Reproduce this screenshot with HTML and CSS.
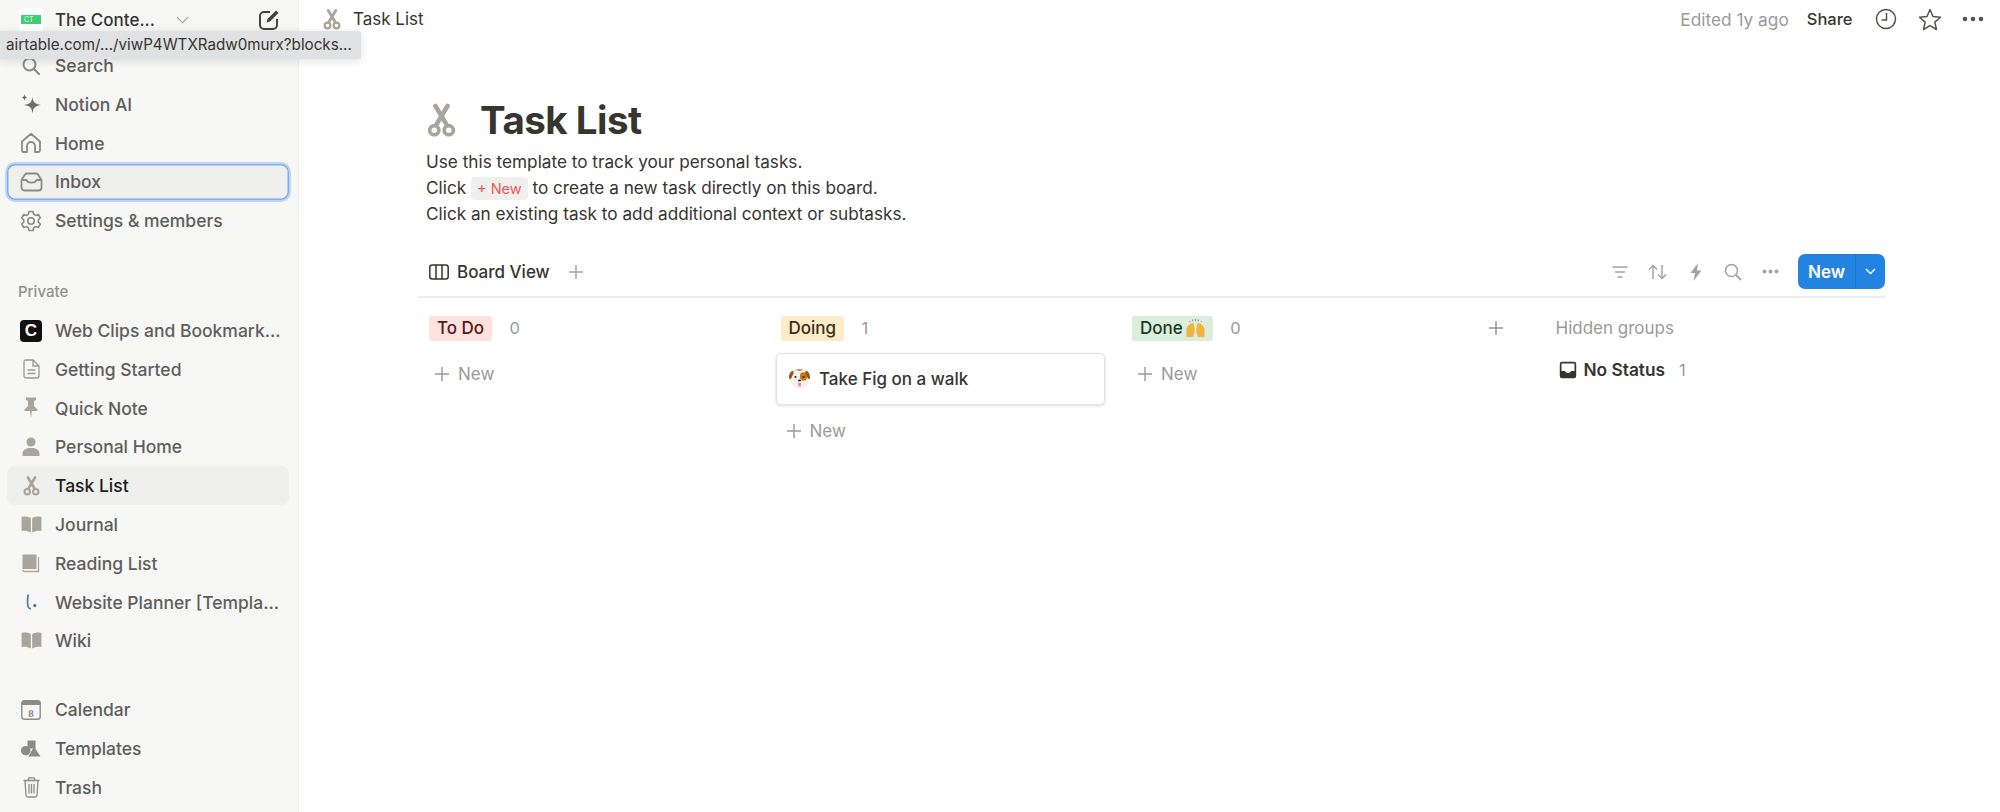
FILE: index.html
```html
<!DOCTYPE html>
<html>
<head>
    <title>Task List</title>
    <link rel="stylesheet" href="styles.css">
</head>
<body>
    <svg class="defs" width="0" height="0">
        <symbol id="scissors" viewBox="0 0 24 28">
            <path d="M7 2 L16 17 M17 2 L8 17" fill="none" stroke="currentColor" stroke-width="3.8" stroke-linecap="round"/>
            <circle cx="6" cy="22" r="3.8" fill="none" stroke="currentColor" stroke-width="3"/>
            <circle cx="18" cy="22" r="3.8" fill="none" stroke="currentColor" stroke-width="3"/>
        </symbol>
        <symbol id="book" viewBox="0 0 22 18">
            <path d="M0.500 1 C4 0 7.500 0.500 10.300 2 V17.500 C7.500 16 4 15.500 1.500 15.800 L0.500 15.500 Z M21.500 1 C18 0 14.500 0.500 11.700 2 V17.500 C14.500 16 18 15.500 20.500 15.800 L21.500 15.500 Z" fill="currentColor"/>
        </symbol>
        <symbol id="plus" viewBox="0 0 16 16">
            <path d="M8 1 V15 M1 8 H15" fill="none" stroke="currentColor" stroke-width="1.4"/>
        </symbol>
    </svg>

    <div class="app">
        <aside class="sidebar">
            <div class="workspace">
                <span class="ws-logo"><span class="ws-badge">CT</span></span>
                <span class="ws-name">The Conte...</span>
                <svg class="ws-caret" viewBox="0 0 14 8"><path d="M1 1 L7 7 L13 1" fill="none" stroke="currentColor" stroke-width="1.2"/></svg>
                <svg class="ws-edit" viewBox="0 0 22 22"><path d="M12 3 H6 A4 4 0 0 0 2 7 V16 A4 4 0 0 0 6 20 H15 A4 4 0 0 0 19 16 V10" fill="none" stroke="currentColor" stroke-width="2"/><path d="M8.500 13.500 L9.500 10 L18 1.500 L20.500 4 L12 12.500 Z" fill="currentColor"/></svg>
            </div>
            <div class="tooltip">airtable.com/.../viwP4WTXRadw0murx?blocks...</div>

            <nav class="nav-group nav-top">
                <a class="nav-row"><span class="nav-icon"><svg width="20" height="20" viewBox="0 0 20 20"><circle cx="8.500" cy="8.500" r="6" fill="none" stroke="currentColor" stroke-width="2"/><path d="M13 13 L18 18" stroke="currentColor" stroke-width="2.200" stroke-linecap="round"/></svg></span>Search</a>
                <a class="nav-row"><span class="nav-icon"><svg width="20" height="20" viewBox="0 0 20 20"><path d="M11.500 2.500 C12 8 13.500 10 20 11 C13.500 12 12 14 11.500 20 C11 14 9.500 12 3 11 C9.500 10 11 8 11.500 2.500 Z M3.500 0 C3.800 2.500 4.500 3.200 7 3.500 C4.500 3.800 3.800 4.500 3.500 7 C3.200 4.500 2.500 3.800 0 3.500 C2.500 3.200 3.200 2.500 3.500 0 Z" fill="#6e6d69"/></svg></span>Notion AI</a>
                <a class="nav-row"><span class="nav-icon"><svg width="22" height="22" viewBox="0 0 22 22"><path d="M2 9.500 L11 1.800 L20 9.500 V18.500 A1.500 1.500 0 0 1 18.500 20 H15 V14 A4 4 0 0 0 7 14 V20 H3.500 A1.500 1.500 0 0 1 2 18.500 Z" fill="none" stroke="currentColor" stroke-width="1.800" stroke-linejoin="round"/></svg></span>Home</a>
                <a class="nav-row nav-focus"><span class="nav-icon"><svg width="23" height="20" viewBox="0 0 23 20"><path d="M1.500 8 L5 2.500 A2 2 0 0 1 6.800 1.500 H16.200 A2 2 0 0 1 18 2.500 L21.500 8 V15.500 A3 3 0 0 1 18.500 18.500 H4.500 A3 3 0 0 1 1.500 15.500 Z M1.500 8 H6.500 C7.500 11.500 15.500 11.500 16.500 8 H21.500" fill="none" stroke="currentColor" stroke-width="1.800"/></svg></span>Inbox</a>
                <a class="nav-row"><span class="nav-icon"><svg width="22" height="22" viewBox="0 0 22 22"><circle cx="11" cy="11" r="3.200" fill="none" stroke="currentColor" stroke-width="1.600"/><path d="M9 1.500 H13 L13.600 4.200 L15.700 5.400 L18.300 4.500 L20.300 8 L18.300 9.800 V12.200 L20.300 14 L18.300 17.500 L15.700 16.600 L13.600 17.800 L13 20.500 H9 L8.400 17.800 L6.300 16.600 L3.700 17.500 L1.700 14 L3.700 12.200 V9.800 L1.700 8 L3.700 4.500 L6.300 5.400 L8.400 4.200 Z" fill="none" stroke="currentColor" stroke-width="1.600" stroke-linejoin="round"/></svg></span>Settings &amp; members</a>
            </nav>

            <div class="nav-label">Private</div>
            <nav class="nav-group">
                <a class="nav-row"><span class="nav-icon"><span class="clip-logo">C</span></span>Web Clips and Bookmark...</a>
                <a class="nav-row"><span class="nav-icon"><svg width="17" height="20" viewBox="0 0 17 20"><path d="M1 3 A2 2 0 0 1 3 1 H10 L16 7 V17 A2 2 0 0 1 14 19 H3 A2 2 0 0 1 1 17 Z M10 1 V7 H16 M4.500 11 H12.500 M4.500 14.500 H12.500" fill="none" stroke="#9b9a97" stroke-width="1.300"/></svg></span>Getting Started</a>
                <a class="nav-row"><span class="nav-icon"><svg class="tan" width="14" height="22" viewBox="0 0 14 22"><path d="M2 0.500 H12 V3 L10 4 V9 L13.500 12.500 V14 H8 L7 21 L6 14 H0.500 V12.500 L4 9 V4 L2 3 Z" fill="currentColor"/></svg></span>Quick Note</a>
                <a class="nav-row"><span class="nav-icon"><svg class="tan" width="18" height="20" viewBox="0 0 18 20"><circle cx="9" cy="5" r="4.500" fill="currentColor"/><path d="M0.500 19 V16.500 C0.500 13 4 11 9 11 C14 11 17.500 13 17.500 16.500 V19 Z" fill="currentColor"/></svg></span>Personal Home</a>
                <a class="nav-row nav-active"><span class="nav-icon"><svg class="tan" width="17" height="20"><use href="#scissors"/></svg></span>Task List</a>
                <a class="nav-row"><span class="nav-icon"><svg class="tan" width="21" height="17"><use href="#book"/></svg></span>Journal</a>
                <a class="nav-row"><span class="nav-icon"><svg class="tan" width="18" height="19" viewBox="0 0 18 19"><path d="M0.500 0.500 H14.500 V15 H0.500 Z" fill="currentColor"/><path d="M0.500 16 C1 17 2 17.500 3 17.500 H16.500 V3" fill="none" stroke="currentColor" stroke-width="1.300"/></svg></span>Reading List</a>
                <a class="nav-row"><span class="nav-icon"><svg width="12" height="16" viewBox="0 0 12 16"><path d="M3.200 0.500 C2.500 5 2.300 9 3 12 C3.400 14 4.500 14.800 6 14.500" fill="none" stroke="#4f8aa5" stroke-width="1.800"/><circle cx="9.800" cy="11.500" r="1.500" fill="#2f6f8f"/></svg></span>Website Planner [Templa...</a>
                <a class="nav-row"><span class="nav-icon"><svg class="tan" width="21" height="17"><use href="#book"/></svg></span>Wiki</a>
            </nav>

            <nav class="nav-group nav-bottom">
                <a class="nav-row"><span class="nav-icon"><svg width="20" height="20" viewBox="0 0 20 20"><rect x="0.800" y="0.800" width="18.400" height="18.400" rx="2.500" fill="none" stroke="#8c8b87" stroke-width="1.400"/><path d="M1 1 H19 V5 H1 Z" fill="#8c8b87"/><text class="cal-day" x="10" y="16.500" text-anchor="middle">8</text></svg></span>Calendar</a>
                <a class="nav-row"><span class="nav-icon"><svg width="20" height="17" viewBox="0 0 20 17"><rect x="6.500" y="0.500" width="8" height="8" fill="#8c8b87"/><circle cx="4.800" cy="10.700" r="4.800" fill="#8c8b87"/><path d="M13 6.500 L19.500 16.500 H7.500 Z" fill="#8c8b87"/></svg></span>Templates</a>
                <a class="nav-row"><span class="nav-icon"><svg width="17" height="21" viewBox="0 0 17 21"><path d="M0.500 3.500 H16.500 M5.500 3.500 V1.500 A1 1 0 0 1 6.500 0.800 H10.500 A1 1 0 0 1 11.500 1.500 V3.500 M2 3.500 L3 18.500 A1.800 1.800 0 0 0 4.800 20 H12.200 A1.800 1.800 0 0 0 14 18.500 L15 3.500 M6 7 V16.500 M8.500 7 V16.500 M11 7 V16.500" fill="none" stroke="#8c8b87" stroke-width="1.300"/></svg></span>Trash</a>
            </nav>
        </aside>

        <main class="main">
            <header class="topbar">
                <div class="crumb">
                    <svg class="tan" width="18" height="21"><use href="#scissors"/></svg>
                    <span>Task List</span>
                </div>
                <div class="top-actions">
                    <span class="edited">Edited 1y ago</span>
                    <span class="share">Share</span>
                    <svg class="top-icon clock" width="22" height="22" viewBox="0 0 22 22"><circle cx="11" cy="11" r="9.500" fill="none" stroke="currentColor" stroke-width="1.500"/><path d="M11.500 5 V12 H6.500" fill="none" stroke="currentColor" stroke-width="1.500"/></svg>
                    <svg class="top-icon star" width="24" height="23" viewBox="0 0 24 23"><path d="M12 1.500 L15 8.500 L22.500 9.200 L16.800 14.100 L18.500 21.500 L12 17.600 L5.500 21.500 L7.200 14.100 L1.500 9.200 L9 8.500 Z" fill="none" stroke="currentColor" stroke-width="1.500" stroke-linejoin="round"/></svg>
                    <svg class="top-icon dots" width="22" height="6" viewBox="0 0 22 6"><circle cx="3" cy="3" r="2.300" fill="currentColor"/><circle cx="11" cy="3" r="2.300" fill="currentColor"/><circle cx="19" cy="3" r="2.300" fill="currentColor"/></svg>
                </div>
            </header>

            <section class="page">
                <div class="page-head">
                    <h1 class="title"><svg class="tan title-icon" width="29" height="35"><use href="#scissors"/></svg>Task List</h1>
                    <p>Use this template to track your personal tasks.</p>
                    <p>Click <span class="inline-code">+ New</span> to create a new task directly on this board.</p>
                    <p>Click an existing task to add additional context or subtasks.</p>
                </div>

                <div class="view-bar">
                    <div class="view-tab">
                        <svg width="20" height="16" viewBox="0 0 20 16"><rect x="0.800" y="1" width="18.400" height="14" rx="2.500" fill="none" stroke="currentColor" stroke-width="1.500"/><path d="M7 1 V15 M13 1 V15" stroke="currentColor" stroke-width="1.500"/></svg>
                        <span>Board View</span>
                        <svg class="view-add" width="16" height="16"><use href="#plus"/></svg>
                    </div>
                    <div class="view-tools">
                        <svg class="tool-filter" width="16" height="12" viewBox="0 0 16 12"><path d="M0.500 1 H15.500 M3 6 H13 M5.500 11 H10.500" stroke="currentColor" stroke-width="1.600"/></svg>
                        <svg width="19" height="16" viewBox="0 0 19 16"><path d="M5 15 V1.500 M1 5.500 L5 1.500 L9 5.500 M14 1 V14.500 M10 10.500 L14 14.500 L18 10.500" fill="none" stroke="currentColor" stroke-width="1.500"/></svg>
                        <svg class="tool-bolt" width="12" height="18" viewBox="0 0 12 18"><path d="M8 0 L0.500 10 H5 L3.500 18 L11.500 7.500 H7 Z" fill="currentColor"/></svg>
                        <svg class="tool-search" width="18" height="18" viewBox="0 0 18 18"><circle cx="7.500" cy="7.500" r="6" fill="none" stroke="currentColor" stroke-width="1.600"/><path d="M12 12 L17 17" stroke="currentColor" stroke-width="1.800"/></svg>
                        <svg width="17" height="5" viewBox="0 0 17 5"><circle cx="2.500" cy="2.500" r="2" fill="currentColor"/><circle cx="8.500" cy="2.500" r="2" fill="currentColor"/><circle cx="14.500" cy="2.500" r="2" fill="currentColor"/></svg>
                        <div class="new-btn">
                            <span class="new-label">New</span>
                            <span class="new-caret"><svg width="11" height="7" viewBox="0 0 11 7"><path d="M1 1 L5.500 5.500 L10 1" fill="none" stroke="#fff" stroke-width="1.400"/></svg></span>
                        </div>
                    </div>
                </div>

                <div class="board">
                    <div class="column">
                        <div class="col-head"><span class="tag tag-red">To Do</span><span class="count">0</span></div>
                        <div class="add-new"><svg width="16" height="16"><use href="#plus"/></svg>New</div>
                    </div>
                    <div class="column">
                        <div class="col-head"><span class="tag tag-yellow">Doing</span><span class="count">1</span></div>
                        <div class="card">
                            <svg width="23" height="21" viewBox="0 0 23 21">
                                <ellipse cx="11.500" cy="10.500" rx="9" ry="9.500" fill="#f8f4ec" stroke="#e4dccd" stroke-width="0.500"/>
                                <ellipse cx="15.500" cy="8.500" rx="3.600" ry="4.200" fill="#c9761f"/>
                                <path d="M7 1.800 C9 1 13 1 15.500 1.800 L11.500 3 Z" fill="#c9761f"/>
                                <path d="M5 2.500 C2.500 3.300 0.800 6.500 1 9.500 C1.200 11.500 2.800 11.500 3.500 9.800 L5.800 4.500 Z" fill="#9a5518"/>
                                <path d="M18 2.500 C20.500 3.300 22.200 6.500 22 9.500 C21.800 11.500 20.200 11.500 19.500 9.800 L17.200 4.500 Z" fill="#9a5518"/>
                                <circle cx="7.500" cy="9" r="1.100" fill="#2b2b2b"/><circle cx="15.500" cy="9" r="1.100" fill="#2b2b2b"/>
                                <ellipse cx="11.500" cy="12.500" rx="1.500" ry="1" fill="#2b2b2b"/>
                                <path d="M10 15 H13 V17 A1.500 1.500 0 0 1 10 17 Z" fill="#ee8a9a"/>
                            </svg>
                            <span>Take Fig on a walk</span>
                        </div>
                        <div class="add-new"><svg width="16" height="16"><use href="#plus"/></svg>New</div>
                    </div>
                    <div class="column">
                        <div class="col-head">
                            <span class="tag tag-green">Done
                                <svg class="hands" width="19" height="19" viewBox="0 0 20 20">
                                    <path d="M0.500 19 V10 L3 6 L4 6.500 L4.300 4.500 L6 5 L6.500 4 L8 5 L9 9 V14 L7.500 19 Z M19.500 19 V10 L17 6 L16 6.500 L15.700 4.500 L14 5 L13.500 4 L12 5 L11 9 V14 L12.500 19 Z" fill="#f0b43c"/>
                                    <path d="M7 0.500 V2.500 M10 0 V2 M13 0.500 V2.500 M4 2 V3 M16 2 V3" stroke="#7a8a99" stroke-width="1"/>
                                </svg>
                            </span>
                            <span class="count">0</span>
                        </div>
                        <div class="add-new"><svg width="16" height="16"><use href="#plus"/></svg>New</div>
                    </div>
                    <div class="col-plus"><svg width="16" height="16"><use href="#plus"/></svg></div>
                    <div class="hidden-col">
                        <div class="hidden-title">Hidden groups</div>
                        <div class="hidden-row">
                            <svg width="18" height="18" viewBox="0 0 18 18"><path d="M0.800 3 A2.200 2.200 0 0 1 3 0.800 H15 A2.200 2.200 0 0 1 17.200 3 V15 A2.200 2.200 0 0 1 15 17.200 H3 A2.200 2.200 0 0 1 0.800 15 Z" fill="#37352f"/><path d="M2.500 2.500 H15.500 V10 H12 C11.500 12.500 6.500 12.500 6 10 H2.500 Z" fill="#fff"/></svg>
                            <span class="hidden-name">No Status</span>
                            <span class="count">1</span>
                        </div>
                    </div>
                </div>
            </section>
        </main>
    </div>
</body>
</html>
```

FILE: styles.css
```css
* {
    box-sizing: border-box;
}
html, body {
    margin: 0;
    height: 812px;
    overflow: hidden;
}
body {
    font-family: 'Inter', 'Liberation Sans', sans-serif;
    color: #37352f;
    background: #fff;
    font-size: 17px;
}
.defs {
    position: absolute;
}
.tan {
    color: #a8a59c;
}
.app {
    display: flex;
    height: 812px;
}

/* sidebar */
.sidebar {
    position: relative;
    width: 299px;
    flex-shrink: 0;
    background: #f7f7f5;
    border-right: 1px solid #efefed;
    padding: 0 9px 0 7px;
    color: #5f5e5b;
}
.workspace {
    display: flex;
    align-items: center;
    height: 39px;
    color: #37352f;
}
.ws-logo {
    display: flex;
    align-items: center;
    justify-content: center;
    width: 24px;
    height: 24px;
    margin-left: 12px;
    background: #fff;
    border-radius: 3px;
}
.ws-badge {
    width: 20px;
    height: 9px;
    background: #3ecf74;
    color: #dff7e7;
    font-size: 7px;
    line-height: 9px;
    padding-left: 3px;
}
.ws-name {
    margin-left: 12px;
    font-size: 17px;
    font-weight: 500;
}
.ws-caret {
    width: 13px;
    height: 8px;
    margin-left: 21px;
    color: #9b9a97;
}
.ws-edit {
    width: 22px;
    height: 22px;
    margin-left: 69px;
    color: #44433f;
}
.tooltip {
    position: absolute;
    left: 0;
    top: 31px;
    width: 361px;
    height: 28px;
    line-height: 28px;
    padding-left: 6px;
    background: #e0e1e3;
    border-radius: 0 3px 3px 0;
    color: #37352f;
    font-size: 15.2px;
    white-space: nowrap;
    box-shadow: 0 2px 10px rgba(0, 0, 0, 0.12);
    z-index: 2;
}
.nav-top {
    margin-top: 7.2px;
}
.nav-row {
    display: flex;
    align-items: center;
    height: 38.8px;
    padding-right: 12px;
    font-size: 17.5px;
    font-weight: 500;
    border-radius: 8px;
    white-space: nowrap;
}
.nav-icon {
    display: flex;
    align-items: center;
    justify-content: center;
    width: 24px;
    margin: 0 12px;
    flex-shrink: 0;
    color: #8c8b87;
}
.nav-focus {
    height: 36px;
    margin: 1.4px 0;
    background: #efefed;
    box-shadow: inset 0 0 0 1.5px #7fafe6, 0 0 0 2px #bcd7f5;
}
.nav-active {
    background: #efefed;
    color: #1f1e1b;
}
.nav-label {
    margin: 42px 0 0 11px;
    height: 29px;
    line-height: 19px;
    font-size: 15px;
    font-weight: 500;
    color: #91918e;
}
.nav-bottom {
    margin-top: 30px;
}
.clip-logo {
    display: flex;
    align-items: center;
    justify-content: center;
    width: 22px;
    height: 22px;
    background: #111;
    border-radius: 4px;
    color: #fff;
    font-family: 'Liberation Sans', sans-serif;
    font-size: 17px;
    font-weight: 700;
}
.cal-day {
    font-family: 'Liberation Serif', serif;
    font-size: 11px;
    font-weight: 700;
    fill: #8c8b87;
}

/* top bar */
.main {
    flex: 1;
    min-width: 0;
}
.topbar {
    display: flex;
    align-items: center;
    justify-content: space-between;
    height: 38px;
    padding: 0 16px 0 24px;
}
.crumb {
    display: flex;
    align-items: center;
    gap: 12px;
    font-size: 17px;
    color: #37352f;
}
.top-actions {
    display: flex;
    align-items: center;
}
.edited {
    color: #9b9a97;
    font-size: 17.3px;
}
.share {
    margin-left: 18px;
    font-size: 16.5px;
    font-weight: 500;
}
.top-icon {
    color: #55534e;
}
.clock {
    margin-left: 22.5px;
}
.star {
    margin-left: 21px;
}
.dots {
    margin-left: 20px;
}

/* page */
.page {
    padding: 0 115px 0 119px;
}
.page-head {
    padding-left: 8px;
}
.page-head p {
    margin: 0;
    height: 26px;
    line-height: 26px;
    font-size: 17.2px;
}
.title {
    display: flex;
    align-items: center;
    margin: 58px 0 5px;
    height: 48px;
    font-size: 38.5px;
    font-weight: 700;
    letter-spacing: -0.5px;
}
.title-icon {
    margin: 0 24px 0 1px;
}
.inline-code {
    display: inline-block;
    height: 23px;
    line-height: 23px;
    padding: 0 6px;
    background: #efefee;
    border-radius: 4px;
    color: #eb5757;
    font-size: 14.5px;
}
.view-bar {
    display: flex;
    align-items: center;
    justify-content: space-between;
    height: 42px;
    margin-top: 28.5px;
    border-bottom: 2px solid #ececeb;
}
.view-tab {
    display: flex;
    align-items: center;
    padding-left: 11px;
    margin-bottom: 8px;
    font-size: 17px;
    font-weight: 500;
}
.view-tab span {
    margin-left: 8px;
}
.view-add {
    margin-left: 18px;
    color: #a5a4a0;
}
.view-tools {
    display: flex;
    align-items: center;
    gap: 20px;
    margin-bottom: 8px;
    color: #a5a4a0;
}
.tool-bolt {
    margin-left: 3px;
}
.tool-search {
    margin-left: 2px;
}
.new-btn {
    display: flex;
    height: 35px;
    width: 87px;
    margin-left: -1px;
    background: #2383e2;
    border-radius: 7px;
    color: #fff;
    font-weight: 600;
    font-size: 17px;
}
.new-label {
    display: flex;
    align-items: center;
    justify-content: center;
    width: 58px;
    border-right: 1px solid #1f75cb;
}
.new-caret {
    display: flex;
    align-items: center;
    justify-content: center;
    flex: 1;
}

/* board */
.board {
    display: flex;
    padding-top: 18px;
    padding-left: 7px;
}
.column {
    width: 328px;
    margin-right: 23.5px;
    flex-shrink: 0;
}
.col-head {
    display: flex;
    align-items: center;
    height: 25px;
    padding-left: 4px;
}
.tag {
    display: inline-flex;
    align-items: center;
    height: 25px;
    padding: 0 8px;
    border-radius: 3px;
    font-size: 17px;
    font-weight: 500;
}
.tag-red {
    background: #ffe2dd;
    color: #5d1715;
}
.tag-yellow {
    background: #fdecc8;
    color: #402c1b;
}
.tag-green {
    background: #dbeddb;
    color: #1c3829;
}
.hands {
    margin-left: 3px;
}
.count {
    margin-left: 17.5px;
    color: #9b9a97;
    font-size: 16.5px;
}
.add-new {
    display: flex;
    align-items: center;
    gap: 8px;
    height: 38px;
    margin-top: 14.5px;
    padding-left: 9px;
    color: #9b9a97;
    font-size: 17px;
}
.card {
    display: flex;
    align-items: center;
    gap: 8.5px;
    height: 52px;
    margin: 12px 0 0 -1px;
    padding-left: 11px;
    background: #fff;
    border: 1px solid #e3e3e1;
    border-radius: 5px;
    box-shadow: 0 1px 3px rgba(15, 15, 15, 0.15);
    font-size: 17px;
    font-weight: 500;
}
.card + .add-new {
    margin-top: 7px;
}
.col-plus {
    display: flex;
    align-items: center;
    height: 25px;
    width: 76px;
    padding-left: 8px;
    color: #8f8e8a;
}
.hidden-col {
    width: 290px;
    flex-shrink: 0;
}
.hidden-title {
    height: 25px;
    line-height: 25px;
    color: #9b9a97;
    font-size: 17px;
}
.hidden-row {
    display: flex;
    align-items: center;
    height: 26px;
    margin-top: 16px;
    padding-left: 3px;
}
.hidden-name {
    margin-left: 7px;
    font-size: 17.3px;
    font-weight: 600;
}
.hidden-row .count {
    margin-left: 14px;
}
```
